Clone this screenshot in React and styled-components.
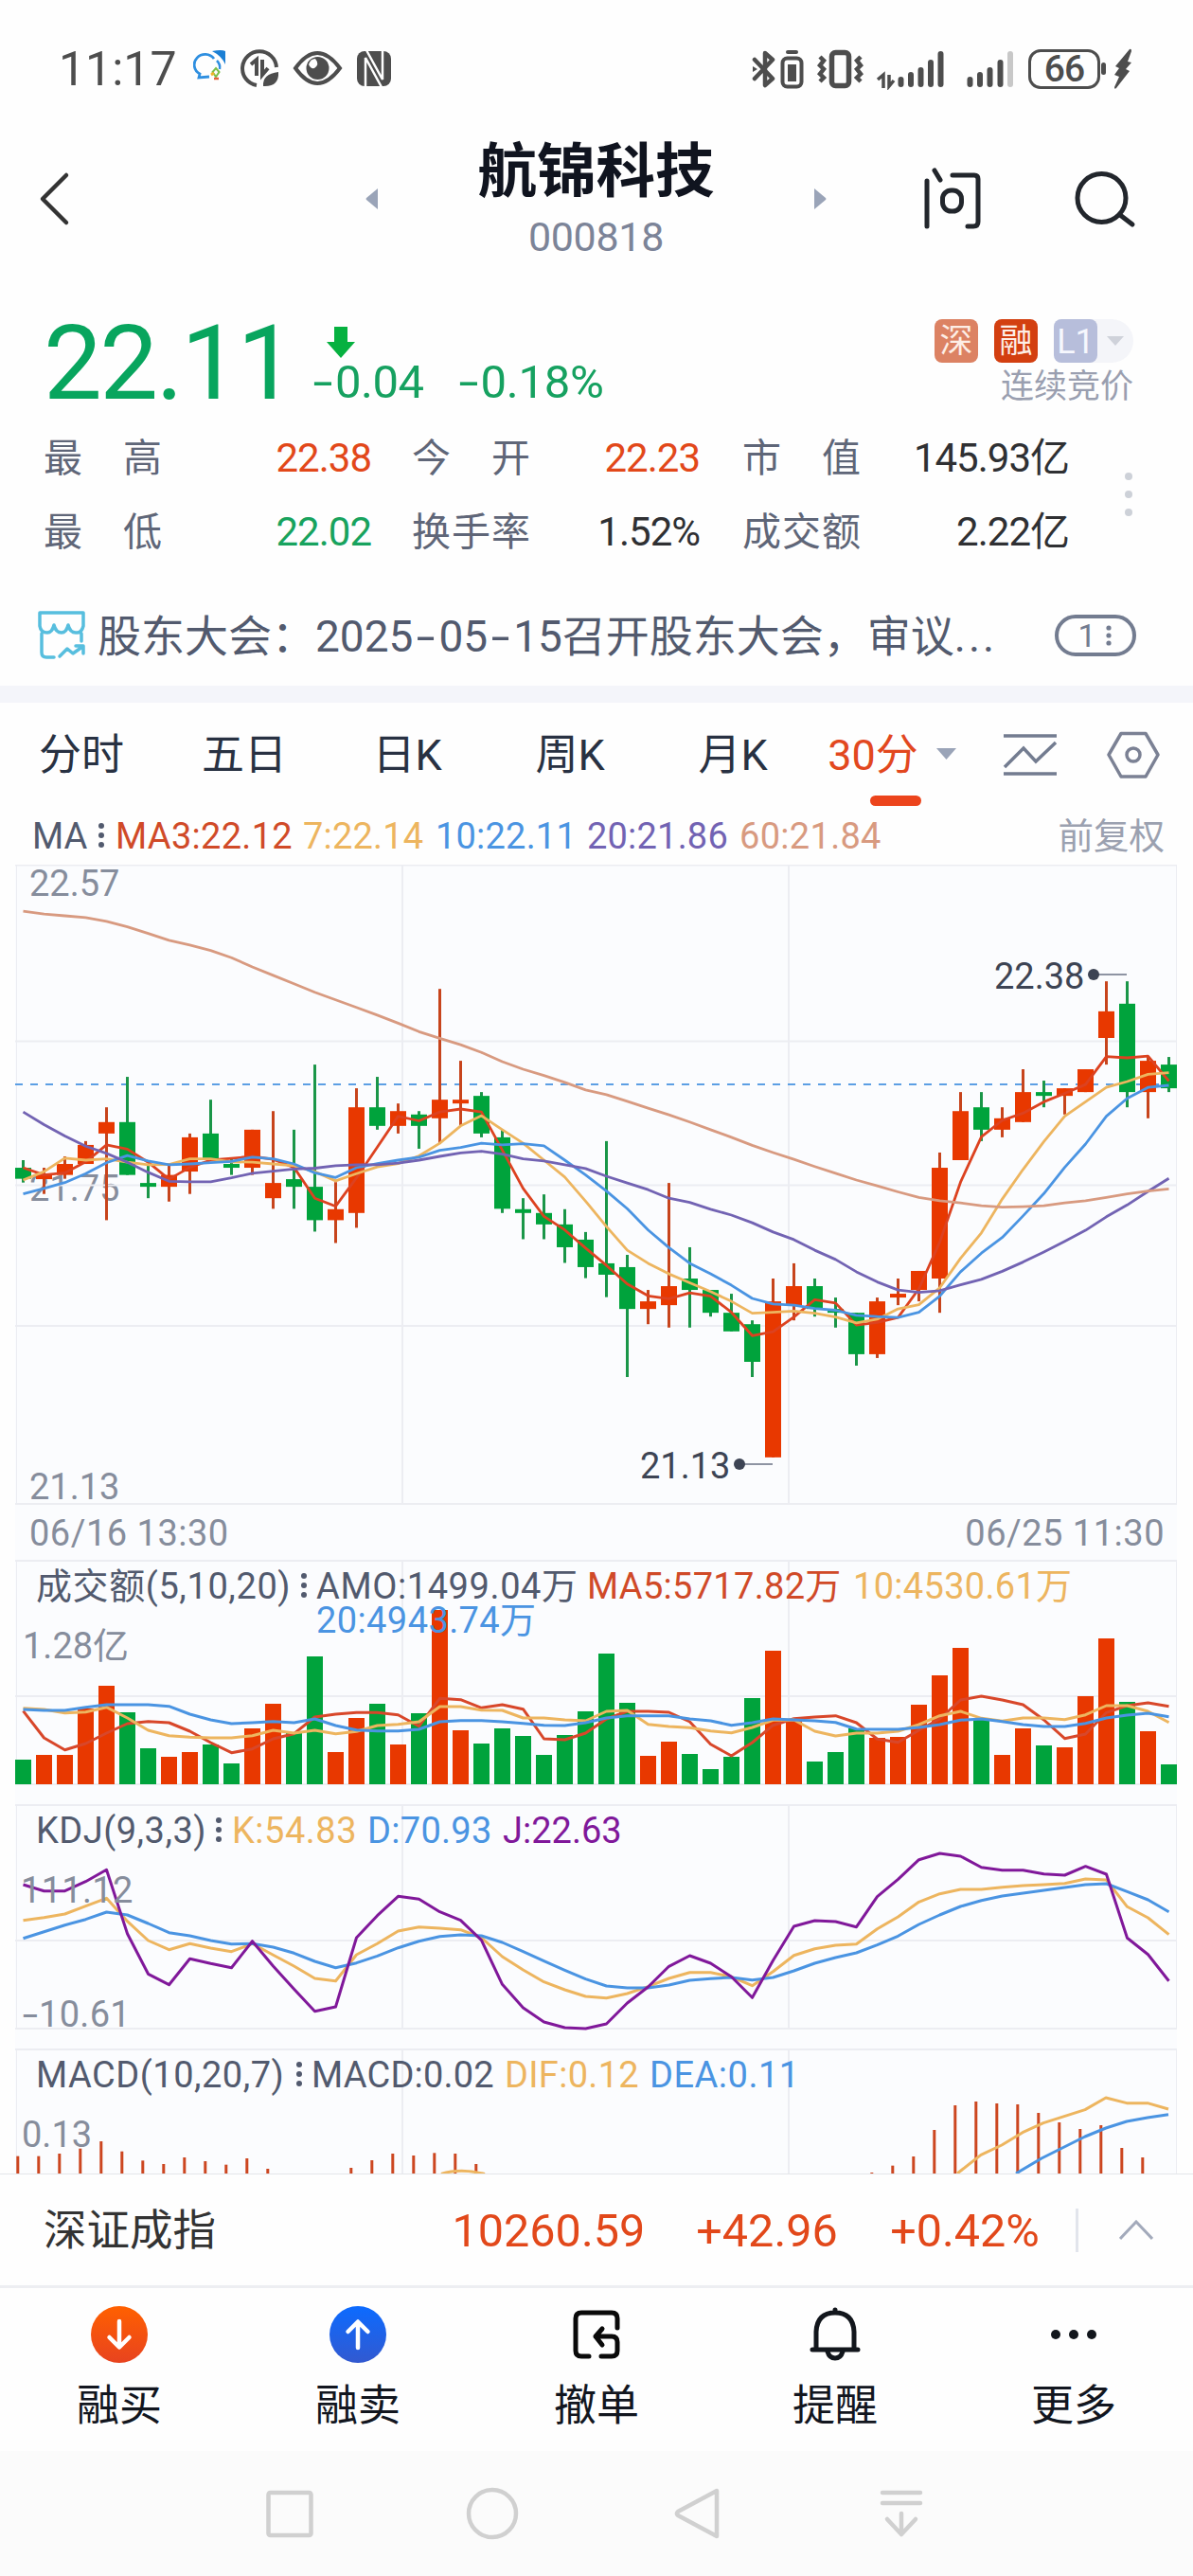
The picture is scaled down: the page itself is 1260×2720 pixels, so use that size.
import React from "react";
import styled, { createGlobalStyle } from "styled-components";

const RED = "#e83800";
const GREEN = "#00a33c";
const LINE = {
  red: "#d04a28",
  yellow: "#edb55f",
  blue: "#4a94e2",
  purple: "#7263b3",
  salmon: "#d89a80",
  violet: "#80189a",
};

const GlobalStyle = createGlobalStyle`
  * { box-sizing: border-box; }
  body {
    margin: 0;
    background: #fefefe;
    font-family: Roboto, "Noto Sans CJK SC", sans-serif;
  }
  svg { display: block; flex: none; }
`;

const Screen = styled.div`
  width: 1260px;
  height: 2720px;
  display: flex;
  flex-direction: column;
  overflow: hidden;
  background: #fefefe;
`;

const Txt = styled.span`
  font-size: ${(p) => p.$size || 38}px;
  color: ${(p) => p.$color || "#525a6e"};
  letter-spacing: ${(p) => p.$ls || 0}px;
  font-weight: ${(p) => p.$weight || 400};
  padding-top: ${(p) => (p.$drop === undefined ? 3 : p.$drop)}px;
  white-space: pre;
  line-height: 1.1;
`;

const Dash = styled.span`
  display: inline-block;
  width: ${(p) => p.$w}px;
  letter-spacing: 0;
  text-align: center;
  transform: scaleX(1.55);
`;

/* ---------- status bar ---------- */
const StatusBar = styled.header`
  height: 146px;
  padding: 0 62px 0 62px;
  display: flex;
  align-items: center;
  justify-content: space-between;
`;
const StatusGroup = styled.div`
  display: flex;
  align-items: center;
`;
const Clock = styled(Txt)`
  width: 142px;
`;
const Battery = styled.div`
  width: 76px;
  height: 42px;
  margin-left: 15px;
  border: 3.5px solid #4d4d4d;
  border-radius: 13px;
  display: flex;
  align-items: center;
  justify-content: center;
`;

/* ---------- title bar ---------- */
const TitleBar = styled.div`
  height: 136px;
  padding: 0 60px 0 40px;
  display: grid;
  grid-template-columns: 340px 500px 1fr;
  align-items: center;
`;
const TitleCenter = styled.div`
  display: flex;
  align-items: center;
  justify-content: space-between;
  padding: 0 7px 0 6px;
  height: 136px;
`;
const Names = styled.div`
  display: flex;
  flex-direction: column;
  align-items: center;
  height: 136px;
`;
const StockName = styled(Txt)`
  line-height: 70px;
`;
const StockCode = styled(Txt)`
  line-height: 66px;
`;
const TitleActions = styled.div`
  display: flex;
  justify-content: flex-end;
  align-items: center;
  gap: 97px;
  padding-bottom: 8px;
`;
const Lift = styled.div`
  padding-bottom: 8px;
`;

/* ---------- quote ---------- */
const Quote = styled.section`
  height: 318px;
  padding: 48px 0 0 46px;
`;
const PriceRow = styled.div`
  height: 114px;
  display: flex;
  align-items: flex-start;
`;
const Price = styled(Txt)`
  line-height: 102px;
  width: 282px;
`;
const ChangeCol = styled.div`
  padding-top: 14px;
  display: flex;
  flex-direction: column;
  flex: 1;
`;
const ChangeLine = styled.div`
  display: flex;
  gap: 34px;
  height: 44px;
  align-items: center;
`;
const ArrowWrap = styled.div`
  padding-left: 16px;
`;
const Tags = styled.div`
  display: flex;
  flex-direction: column;
  align-items: flex-end;
  padding: 7px 63px 0 0;
`;
const TagRow = styled.div`
  display: flex;
  gap: 17px;
`;
const Tag = styled.div`
  width: 46px;
  height: 46px;
  border-radius: 8px;
  background: ${(p) => p.$bg};
  display: flex;
  align-items: center;
  justify-content: center;
`;
const LevelPill = styled.div`
  width: 84px;
  height: 46px;
  display: flex;
  align-items: center;
  gap: 9px;
  background: #f4f5f9;
  border-radius: 8px 23px 23px 8px;
`;
const Phase = styled(Txt)`
  line-height: 46px;
`;
const StatsWrap = styled.div`
  display: flex;
  align-items: center;
`;
const StatsGrid = styled.div`
  width: 1083px;
  display: grid;
  grid-template-columns: 347px 347px 389px;
  grid-auto-rows: 78px;
`;
const STAT_INDENT = [0, 42, 44];
const Stat = styled.div`
  display: flex;
  align-items: center;
  justify-content: space-between;
  padding-right: ${(p) => (p.$col === 2 ? 0 : 1)}px;
  padding-left: ${(p) => STAT_INDENT[p.$col]}px;
`;
const StatLabel = styled.div`
  width: 125px;
  display: flex;
  justify-content: space-between;
`;

/* ---------- notice ---------- */
const Notice = styled.div`
  height: 124px;
  padding: 18px 60px 0 40px;
  display: flex;
  align-items: center;
`;
const NoticeText = styled(Txt)`
  flex: 1;
  padding-left: 13px;
`;
const Ellipsis = styled.span`
  letter-spacing: 3px;
`;
const CountPill = styled.div`
  width: 86px;
  height: 44px;
  border: 4px solid #737c90;
  border-radius: 22px;
  display: flex;
  align-items: center;
  justify-content: center;
  gap: 8px;
`;
const Band = styled.div`
  height: 18px;
  background: #f4f5fa;
`;

/* ---------- tabs ---------- */
const Tabs = styled.nav`
  height: 109px;
  display: flex;
  align-items: stretch;
`;
const Tab = styled.div`
  width: ${(p) => p.$w || 172}px;
  display: flex;
  flex-direction: column;
  align-items: center;
  justify-content: center;
  position: relative;
`;
const Underline = styled.div`
  position: absolute;
  right: 11px;
  bottom: 0;
  width: 54px;
  height: 11px;
  border-radius: 6px;
  background: #ec441c;
`;
const TabIcons = styled.div`
  display: flex;
  align-items: center;
  padding-left: 5px;
`;
const TabIconGap = styled.div`
  width: 52px;
`;

/* ---------- legends ---------- */
const Legend = styled.div`
  display: flex;
  align-items: center;
  height: ${(p) => p.$h || 62}px;
  padding: 0 30px 0 ${(p) => p.$left || 34}px;
`;
const Slot = styled.div`
  width: ${(p) => p.$w}px;
  display: flex;
  align-items: center;
`;
const Spacer = styled.div`
  flex: 1;
`;

/* ---------- charts ---------- */
const Charts = styled.main`
  margin: 0 17px 0 16px;
  height: 1382px;
  background: #fbfcfe;
`;
const Panel = styled.section`
  position: relative;
  height: ${(p) => p.$h}px;
  svg { position: relative; z-index: 1; overflow: hidden; }
`;
const Overlay = styled.div`
  position: absolute;
  left: 0;
  top: 0;
  right: 0;
  z-index: 2;
`;
const AxisLabel = styled(Txt)`
  position: absolute;
  left: ${(p) => p.$x}px;
  top: ${(p) => p.$y}px;
  z-index: ${(p) => (p.$behind ? 0 : 2)};
  padding-top: 0;
  line-height: 40px;
`;
const DateRow = styled.div`
  height: 58px;
  padding: 0 13px 0 15px;
  display: flex;
  align-items: center;
  justify-content: space-between;
`;

/* ---------- bottom ---------- */
const IndexBar = styled.div`
  height: 121px;
  border-top: 1px solid #e4e6ea;
  border-bottom: 3px solid #edeef2;
  padding: 0 42px 0 46px;
  display: flex;
  align-items: center;
`;
const Divider = styled.div`
  width: 3px;
  height: 46px;
  background: #e2e5ec;
  margin: 0 43px 0 36px;
`;
const Toolbar = styled.div`
  height: 172px;
  display: grid;
  grid-template-columns: repeat(5, 252px);
`;
const Tool = styled.div`
  display: flex;
  flex-direction: column;
  align-items: center;
  padding-top: 19px;
  gap: 18px;
`;
const NavBar = styled.footer`
  flex: 1;
  background: #fbfbfb;
  display: flex;
  align-items: center;
  padding-left: 280px;
`;

/* ---------- icons ---------- */
const VDots = ({ color = "#525a6e", r = 3, gap = 10 }) => (
  <svg width="10" height={gap * 2 + 10} viewBox={`0 0 10 ${gap * 2 + 10}`} fill={color}>
    {[0, 1, 2].map((i) => (
      <circle key={i} cx="5" cy={5 + gap * i} r={r} />
    ))}
  </svg>
);

const StatusLeftIcons = () => (
  <svg width="212" height="44" viewBox="204 51 212 44" fill="none">
    <path d="M226 62 A11.5 11 0 1 0 211 78 L210 82 L221 81" stroke="#2f8fe0" strokeWidth="2.800" />
    <path d="M224 54 Q234 52 238 54 L238 68 Q234 59 224 54Z" fill="#1b7fd4" />
    <path d="M229 64 Q233 68 232 73" stroke="#2f8fe0" strokeWidth="2.500" />
    <path d="M228 72 l3.500 4 -3.500 5 -3.500 -5z" stroke="#7bbf4a" strokeWidth="2" />
    <path d="M223 79 l3 -2" stroke="#f0b429" strokeWidth="3" />
    <path d="M226 83 l5 0" stroke="#e2643c" strokeWidth="2.500" />
    <path d="M271 90 A18 18 0 1 1 292 71" stroke="#4d4d4d" strokeWidth="4" />
    <path d="M265 68 l6 -5 V80 M277 63 V79 l6 -7" stroke="#4d4d4d" strokeWidth="4" />
    <path d="M278 91 Q277 78 294 76 Q295 92 278 91Z" fill="#4d4d4d" />
    <path d="M312 72 Q335 40 359 72 Q335 104 312 72Z" stroke="#4d4d4d" strokeWidth="4" />
    <circle cx="335.500" cy="72" r="12" fill="#4d4d4d" />
    <path d="M326 68 Q328 62 333 62 Q338 68 332 72 Q328 73 326 68Z" fill="#fefefe" />
    <rect x="377" y="54" width="36" height="37" rx="8" fill="#4d4d4d" />
    <path d="M386 92 V61 L403 92 M404 53 V84 L387 53" stroke="#fefefe" strokeWidth="2.500" />
  </svg>
);

const StatusRightIcons = () => (
  <svg width="277" height="44" viewBox="793 50 277 44" fill="none" stroke="#4d4d4d">
    <path d="M796 62 L815 82 L807 89 V55 L815 62 L796 82" strokeWidth="4.500" strokeLinejoin="round" strokeLinecap="round" />
    <path d="M794 69 l5 3 -5 3z" fill="#4d4d4d" stroke="none" />
    <rect x="829" y="52" width="13" height="4" rx="2" fill="#4d4d4d" stroke="none" />
    <rect x="825.500" y="60.500" width="20" height="30" rx="5" strokeWidth="4" />
    <rect x="831" y="67" width="9" height="18" fill="#4d4d4d" stroke="none" />
    <rect x="877.500" y="54.500" width="18" height="35" rx="4" strokeWidth="5.500" />
    <path d="M865 59 l4 4 -4 5 4 4 -4 5 4 4 -4 4 M908 59 l-4 4 4 5 -4 4 4 5 -4 4 4 4" strokeWidth="4.500" />
    <path d="M926 83 l6 -5 V92 M938 78 V90 l5 -6" strokeWidth="3.500" />
    <g strokeWidth="6" strokeLinecap="round">
      <path d="M950.500 83 V88 M961 78 V88 M971.500 73 V88 M982 65 V88 M992.500 56 V88" />
      <path d="M1023.500 83 V88 M1034 78 V88 M1044.500 73 V88 M1055.500 65 V88" />
      <path d="M1066 56 V88" stroke="#c8c8c8" />
    </g>
  </svg>
);

const BoltIcon = () => (
  <svg width="36" height="44" viewBox="1162 50 36 44" fill="#4d4d4d">
    <rect x="1163" y="65" width="5" height="13" rx="2.500" />
    <path d="M1193 51 Q1195 50 1195 53 L1191 64 L1195 65 L1189 72 L1193 74 L1179 92 Q1177 94 1177 91 L1182 80 L1177 78 L1182 71 L1178 69 Z" />
  </svg>
);

const AskIcon = () => (
  <svg width="62" height="66" viewBox="975 177 62 66" fill="none" stroke="#22262c" strokeWidth="5" strokeLinecap="round" strokeLinejoin="round">
    <path d="M979 191 V239 M987 180 L993 190" />
    <path d="M1006 185 H1029 Q1033 185 1033 189 V234 Q1033 239 1028 239 H1022" />
    <rect x="995.500" y="201" width="20" height="22" rx="9" />
  </svg>
);

const SearchIcon = () => (
  <svg width="66" height="62" viewBox="1134 179 66 62" fill="none" stroke="#22262c" strokeWidth="5" strokeLinecap="round">
    <circle cx="1163.500" cy="209" r="25.500" />
    <path d="M1183 227 L1196 237" />
  </svg>
);

const ShopIcon = () => (
  <svg width="50" height="52" viewBox="40 646 50 52" fill="none" stroke="#57bede" strokeWidth="3.500" strokeLinejoin="round" strokeLinecap="round">
    <path d="M42 648 H88 V662 Q86 670 80 669 Q74 669 72 661 Q70 669 65 669 Q59 669 57 661 Q55 669 50 669 Q43 669 42 662 Z" />
    <path d="M44 670 V690 Q44 695 49 695 H57 M86 670 V678" />
    <path d="M63 694 L71 686 L77 691 L87 684 M80 683 H88 V691" />
  </svg>
);

const CaretIcon = () => (
  <svg width="70" height="28" viewBox="989 790 70 28" fill="#9aa4b8">
    <path d="M989 797 H1010 L999.500 809 Z" />
  </svg>
);

const TrendIcon = () => (
  <svg width="58" height="46" viewBox="1059 773 58 46" fill="none" stroke="#737c90" strokeWidth="3.500">
    <path d="M1060 776 H1116 M1060 816 H1116 M1061 809 L1081 789 L1094 803 L1115 783" />
  </svg>
);

const HexIcon = () => (
  <svg width="56" height="52" viewBox="1169 770 56 52" fill="none" stroke="#7b8194" strokeWidth="3.500" strokeLinejoin="round">
    <path d="M1184 773.500 H1210 L1223 796 L1210 819 H1184 L1171 796 Z" />
    <circle cx="1197" cy="796" r="7" />
  </svg>
);

const CircleArrow = ({ up }) => (
  <svg width="60" height="60" viewBox="0 0 60 60">
    <defs>
      <linearGradient id={up ? "gUp" : "gDown"} x1="0" y1="0" x2="0" y2="1">
        <stop offset="0" stopColor={up ? "#0c6bff" : "#ff6000"} />
        <stop offset="1" stopColor={up ? "#3259d0" : "#e8431f"} />
      </linearGradient>
    </defs>
    <circle cx="30" cy="30" r="30" fill={`url(#${up ? "gUp" : "gDown"})`} />
    <path
      d={up ? "M30 44 V17 M19.500 27 L30 16.500 L40.500 27" : "M30 16 V43 M19.500 33 L30 43.500 L40.500 33"}
      fill="none"
      stroke="#fff"
      strokeWidth="4.500"
      strokeLinecap="round"
      strokeLinejoin="round"
    />
  </svg>
);

const CancelIcon = () => (
  <svg width="60" height="60" viewBox="600 2435 60 60" fill="none" stroke="#0a0a0a" strokeWidth="5" strokeLinecap="round" strokeLinejoin="round">
    <path d="M652 2458 V2448 Q652 2442 646 2442 H614 Q608 2442 608 2448 V2482 Q608 2488 614 2488 H622" />
    <path d="M636 2459 L629 2467 L636 2476 M629 2467 H646 Q652 2467 652 2473 V2482 Q652 2488 646 2488 H635" />
  </svg>
);

const BellIcon = () => (
  <svg width="60" height="60" viewBox="852 2435 60 60" fill="none" stroke="#12161c" strokeWidth="5" strokeLinecap="round" strokeLinejoin="round">
    <path d="M862 2480 V2462 Q863 2442 882 2442 Q901 2442 902 2462 V2480 M858 2481 H906 M882 2439 V2441" />
    <path d="M874 2483 Q876 2490 882 2490 Q888 2490 890 2483" />
  </svg>
);

const MoreIcon = () => (
  <svg width="60" height="60" viewBox="0 0 60 60" fill="#12161c">
    <circle cx="11" cy="30" r="5" />
    <circle cx="30" cy="30" r="5" />
    <circle cx="49" cy="30" r="5" />
  </svg>
);

const NavIcons = () => (
  <svg width="696" height="56" viewBox="281 2626 696 56" fill="none" stroke="#d0d0d0" strokeWidth="4.500" strokeLinecap="round" strokeLinejoin="round">
    <rect x="284.500" y="2632" width="45" height="45" rx="2" />
    <circle cx="521" cy="2654" r="25" />
    <path d="M758 2630 V2678 L717 2656 Q715 2654 717 2652 Z" />
    <path d="M933 2632 H973 M933 2643 H973 M953 2654 V2676 M938 2660 L953 2676 L968 2660" />
  </svg>
);

/* ---------- chart data ---------- */
/* colour, body top, body bottom, high, low */
const CANDLES = [
  ["g", 746, 772, 728, 781], ["r", 763, 773, 746, 808], ["r", 737, 763, 719, 772], ["r", 692, 737, 683, 737],
  ["r", 638, 665, 603, 870], ["g", 638, 763, 531, 763], ["g", 782, 791, 737, 818], ["r", 763, 791, 740, 826],
  ["r", 674, 755, 665, 808], ["g", 665, 728, 585, 728], ["g", 737, 746, 722, 763], ["r", 656, 746, 656, 763],
  ["r", 782, 818, 612, 843], ["g", 773, 791, 656, 843], ["g", 791, 870, 502, 897], ["r", 844, 870, 780, 924],
  ["r", 603, 853, 558, 888], ["g", 603, 647, 531, 656], ["r", 612, 647, 594, 665], ["g", 620, 647, 612, 701],
  ["r", 585, 629, 323, 690], ["r", 585, 594, 493, 645], ["g", 576, 665, 567, 674], ["g", 674, 843, 656, 853],
  ["g", 844, 853, 818, 915], ["g", 853, 880, 809, 915], ["g", 880, 934, 844, 971], ["g", 916, 981, 898, 1007],
  ["g", 972, 999, 683, 1052], ["g", 981, 1080, 952, 1241], ["r", 1062, 1080, 1035, 1116], ["r", 1026, 1071, 782, 1124],
  ["g", 1008, 1035, 934, 1124], ["g", 1035, 1089, 1035, 1098], ["g", 1089, 1133, 1044, 1133], ["g", 1116, 1205, 1107, 1241],
  ["r", 1062, 1431, 1008, 1431], ["r", 1026, 1071, 972, 1107], ["g", 1026, 1080, 1008, 1098], ["g", 1080, 1089, 1053, 1124],
  ["g", 1089, 1187, 1089, 1214], ["r", 1062, 1187, 1053, 1196], ["r", 1044, 1053, 1008, 1071], ["r", 990, 1035, 990, 1062],
  ["r", 746, 1008, 710, 1089], ["r", 612, 728, 567, 728], ["g", 603, 656, 567, 683], ["r", 629, 656, 603, 674],
  ["r", 567, 638, 513, 638], ["g", 567, 576, 540, 603], ["r", 558, 576, 558, 620], ["r", 513, 567, 513, 567],
  ["r", 376, 439, 305, 502], ["g", 358, 567, 305, 603], ["r", 493, 567, 484, 629], ["g", 502, 558, 484, 567],
];
const MA3 = [
  746, 763, 758, 732, 692, 702, 733, 773, 745, 728, 724, 719, 714, 725, 745, 818, 837,
].slice(0, 12).concat([
  726, 745, 818, 837, 770, 697, 624, 635, 614, 607, 614, 704,
  795, 861, 893, 936, 977, 1021, 1049, 1056, 1042, 1050, 1088, 1143, 1134, 1099, 1058, 1066, 1118, 1112, 1100, 1032,
  922, 780, 673, 634, 617, 590, 570, 549, 483, 486, 482, 541,
]);
const MA7 = [
  775, 755, 723, 728, 725, 733, 739, 738, 725, 725, 732, 733, 737, 741, 755, 777, 760, 744, 736, 718, 688, 647, 623, 656,
  688, 728, 768, 825, 885, 941, 972, 997, 1018, 1039, 1062, 1090, 1088, 1085, 1090, 1099, 1113, 1104, 1080, 1070,
  1030, 960, 900, 820, 750, 684, 624, 590, 556, 542, 525, 521,
];
const MA10 = [
  808, 795, 781, 760, 734, 717, 730, 739, 737, 734, 731, 721, 725, 737, 758, 769, 746, 736, 728, 721, 705, 698, 688, 692,
  689, 694, 728, 763, 801, 843, 893, 935, 972, 997, 1024, 1055, 1068, 1071, 1079, 1083, 1095, 1098, 1100, 1088,
  1050, 992, 948, 911, 860, 807, 745, 690, 624, 582, 556, 551,
];
const MA20 = [
  614, 644, 671, 695, 712, 733, 757, 778, 779, 779, 770, 759, 754, 749, 747, 741, 739, 739, 735, 728, 719, 711, 707, 714,
  725, 730, 739, 748, 766, 782, 798, 818, 828, 844, 858, 876, 898, 916, 941, 963, 992, 1016, 1035, 1041,
  1037, 1023, 1010, 991, 969, 945, 920, 894, 862, 834, 802, 771,
];
const MA60 = [
  139, 146, 150, 154, 163, 176, 192, 208, 219, 232, 249, 271, 291, 311, 331, 349, 367, 385, 404, 424, 440, 455, 473, 495,
  513, 528, 544, 562, 573, 589, 605, 621, 638, 656, 674, 693, 710, 726, 743, 759, 775, 789, 803, 816,
  824, 829, 836, 839, 838, 836, 829, 824, 816, 808, 801, 796,
];
const VOLUMES = [
  834, 819, 819, 672, 600, 684, 798, 825, 810, 786, 846, 735, 657, 750, 507, 810, 702, 657, 786, 687, 360, 741, 783, 735,
  759, 819, 756, 681, 498, 654, 822, 777, 816, 864, 825, 639, 489, 705, 840, 810, 735, 765, 762, 660,
  567, 480, 705, 819, 735, 789, 795, 633, 450, 651, 744, 849,
];
const V5 = [
  680, 765, 803, 783, 750, 720, 713, 717, 744, 780, 812, 800, 768, 752, 699, 690, 685, 685, 692, 728, 640, 644, 670, 660,
  674, 768, 771, 750, 705, 681, 681, 684, 714, 785, 822, 780, 725, 704, 699, 695, 717, 769, 779, 741,
  705, 645, 633, 645, 660, 708, 767, 753, 685, 663, 654, 665,
];
const V10 = [
  671, 675, 686, 683, 668, 702, 741, 758, 763, 765, 765, 758, 741, 750, 741, 752, 745, 726, 722, 714, 666, 666, 677, 678,
  702, 702, 708, 711, 681, 678, 722, 729, 733, 743, 749, 732, 709, 708, 744, 759, 750, 750, 744, 723,
  695, 681, 703, 712, 702, 702, 707, 692, 663, 663, 681, 716,
];
const V20 = [
  675, 678, 678, 668, 660, 660, 660, 665, 690, 708, 720, 717, 713, 717, 705, 726, 740, 743, 743, 738, 714, 710, 710, 714,
  719, 725, 726, 717, 702, 695, 695, 695, 705, 711, 725, 717, 705, 708, 711, 716, 737, 738, 738, 732,
  723, 709, 705, 713, 723, 729, 729, 719, 702, 693, 687, 698,
];
const K_LINE = [
  413, 404, 393, 368, 343, 416, 477, 506, 487, 501, 512, 487, 523, 558, 597, 605, 522, 487, 447, 434, 438, 443, 468, 528,
  570, 608, 633, 654, 659, 645, 623, 597, 578, 578, 592, 620, 575, 524, 503, 492, 488, 440, 402, 355,
  329, 315, 315, 308, 303, 300, 296, 282, 285, 370, 405, 458,
];
const D_LINE = [
  470, 449, 428, 410, 387, 396, 423, 452, 462, 477, 488, 487, 498, 517, 543, 563, 548, 526, 500, 479, 464, 459, 462, 483,
  512, 542, 571, 599, 621, 627, 627, 618, 603, 598, 594, 602, 594, 573, 549, 531, 516, 491, 463, 426,
  396, 369, 350, 336, 327, 318, 309, 300, 297, 322, 348, 386,
];
const J_LINE = [
  300, 320, 320, 290, 253, 455, 583, 617, 535, 550, 563, 479, 558, 631, 701, 687, 468, 398, 337, 346, 386, 413, 476, 616,
  690, 735, 753, 756, 741, 675, 624, 559, 525, 549, 592, 658, 540, 432, 414, 417, 434, 338, 283, 221,
  201, 210, 245, 254, 254, 266, 270, 242, 267, 469, 521, 605,
];
const MACD_BARS = {
  0: 1160, 1: 1160, 2: 1152, 3: 1136, 4: 1113, 5: 1145, 6: 1174, 7: 1185, 8: 1164, 9: 1176, 10: 1187, 11: 1167, 12: 1200,
  16: 1197, 17: 1173, 18: 1152, 19: 1158, 20: 1150, 21: 1152, 22: 1185,
  41: 1212, 42: 1190, 43: 1161, 44: 1077, 45: 999, 46: 987, 47: 993, 48: 996, 49: 1023, 50: 1053, 51: 1074, 52: 1062, 53: 1134, 54: 1164,
};
const DIF = [
  [995, 1215], [1020, 1156], [1042, 1125], [1064, 1085], [1086, 1055], [1108, 1034], [1130, 1013], [1152, 975],
  [1174, 992], [1196, 992], [1218, 1011],
];
const DEA = [
  [1057, 1215], [1084, 1167], [1106, 1134], [1130, 1098], [1152, 1071], [1174, 1050], [1196, 1038], [1218, 1028],
];

const cx = (i) => 8.5 + 22 * i;
const yMain = (v) => v / 2.24 - 13;
const yVol = (v) => v / 3 - 67;
const yKdj = (v) => v / 3 - 15;
const yMacd = (v) => v / 3 - 273;

const Series = ({ data, y, color, w = 2.8 }) => (
  <polyline
    points={data.map((v, i) => `${cx(i)},${y(v).toFixed(1)}`).join(" ")}
    fill="none"
    stroke={color}
    strokeWidth={w}
    strokeLinejoin="round"
  />
);

const Grid = ({ rows, bottom }) => (
  <g stroke="#ecedf2" strokeWidth="2">
    {rows.map((r) => (
      <line key={r} x1="0" x2="1227" y1={r} y2={r} />
    ))}
    <path d={`M409 ${rows[0]} V${bottom} M817 ${rows[0]} V${bottom}`} />
    <path d={`M1.500 ${rows[0]} V${bottom} M1226.500 ${rows[0]} V${bottom}`} strokeWidth="1" />
  </g>
);

const MainChart = () => (
  <Panel $h={676}>
    <AxisLabel $x={15} $y={0} $color="#868d9c" $behind>22.57</AxisLabel>
    <AxisLabel $x={15} $y={322} $color="#868d9c" $behind>21.75</AxisLabel>
    <AxisLabel $x={15} $y={637} $color="#868d9c" $behind>21.13</AxisLabel>
    <svg width="1227" height="676" viewBox="0 0 1227 676">
      <Grid rows={[0.5, 186.5, 338.5, 487, 675]} bottom={675} />
      <line x1="0" x2="1227" y1="232" y2="232" stroke="#5c9fe4" strokeWidth="2" strokeDasharray="8 8" />
      {CANDLES.map(([c, t, b, h, l], i) => (
        <g key={i} fill={c === "r" ? RED : GREEN}>
          <rect x={cx(i) - 1.5} y={yMain(h)} width="3" height={(l - h) / 2.24} fill={c === "r" ? "#c7441c" : "#1a9648"} />
          <rect x={cx(i) - 8.5} y={yMain(t)} width="17" height={(b - t) / 2.24} />
        </g>
      ))}
      <Series data={MA3} y={yMain} color="#dc4220" />
      <Series data={MA7} y={yMain} color={LINE.yellow} />
      <Series data={MA10} y={yMain} color={LINE.blue} />
      <Series data={MA20} y={yMain} color={LINE.purple} />
      <Series data={MA60} y={yMain} color={LINE.salmon} />
      <g stroke="#8e94a3" strokeWidth="2" fill="#3d4454">
        <line x1="1144" x2="1174" y1="116" y2="116" />
        <circle cx="1139" cy="116" r="6" stroke="none" />
        <line x1="770" x2="800" y1="633" y2="633" />
        <circle cx="765" cy="633" r="6" stroke="none" />
      </g>
    </svg>
    <AxisLabel $x={1034} $y={98} $color="#3d4454">22.38</AxisLabel>
    <AxisLabel $x={660} $y={615} $color="#3d4454">21.13</AxisLabel>
  </Panel>
);

const VolumeChart = () => (
  <Panel $h={258}>
    <svg width="1227" height="258" viewBox="0 0 1227 258">
      <Grid rows={[1, 144, 237]} bottom={237} />
      {VOLUMES.map((v, i) => (
        <rect key={i} x={cx(i) - 8.5} y={yVol(v)} width="17" height={(912 - v) / 3} fill={CANDLES[i][0] === "r" ? RED : GREEN} />
      ))}
      <Series data={V5} y={yVol} color="#d8472a" w={3} />
      <Series data={V10} y={yVol} color={LINE.yellow} w={3} />
      <Series data={V20} y={yVol} color={LINE.blue} w={3} />
    </svg>
    <Overlay>
      <Legend $h={54} $left={22}>
        <Slot $w={278}><Txt $ls={0.6}>成交额(5,10,20)</Txt></Slot>
        <Slot $w={18}><VDots /></Slot>
        <Slot $w={286}><Txt $ls={0.6}>AMO:1499.04万</Txt></Slot>
        <Slot $w={281}><Txt $color={LINE.red} $ls={0.3}>MA5:5717.82万</Txt></Slot>
        <Txt $color={LINE.yellow} $ls={0.3}>10:4530.61万</Txt>
      </Legend>
    </Overlay>
    <AxisLabel $x={318} $y={44} $color={LINE.blue} $ls={0.4}>20:4943.74万</AxisLabel>
    <AxisLabel $x={8} $y={71} $color="#868d9c">1.28亿</AxisLabel>
  </Panel>
);

const KdjChart = () => (
  <Panel $h={258}>
    <svg width="1227" height="258" viewBox="0 0 1227 258">
      <Grid rows={[1, 144, 237]} bottom={237} />
      <Series data={K_LINE} y={yKdj} color={LINE.yellow} w={3} />
      <Series data={D_LINE} y={yKdj} color={LINE.blue} w={3} />
      <Series data={J_LINE} y={yKdj} color={LINE.violet} w={3} />
    </svg>
    <Overlay>
      <Legend $h={54} $left={22}>
        <Slot $w={188}><Txt $ls={0.5}>KDJ(9,3,3)</Txt></Slot>
        <Slot $w={19}><VDots /></Slot>
        <Slot $w={143}><Txt $color={LINE.yellow} $ls={0.5}>K:54.83</Txt></Slot>
        <Slot $w={143}><Txt $color={LINE.blue} $ls={0.3}>D:70.93</Txt></Slot>
        <Txt $color={LINE.violet}>J:22.63</Txt>
      </Legend>
    </Overlay>
    <AxisLabel $x={6} $y={71} $color="#868d9c" $ls={0.3}>111.12</AxisLabel>
    <AxisLabel $x={7} $y={202} $color="#868d9c" $ls={0.3}><Dash $w={18}>-</Dash>10.61</AxisLabel>
  </Panel>
);

const MacdChart = () => (
  <Panel $h={132}>
    <svg width="1227" height="132" viewBox="0 0 1227 132">
      <Grid rows={[1]} bottom={132} />
      {Object.entries(MACD_BARS).map(([i, v]) => (
        <rect key={i} x={1.3 + 22 * i} y={yMacd(v)} width="3" height={(1215 - v) / 3} fill="#cc4620" />
      ))}
      <g fill="none" strokeWidth="3" strokeLinejoin="round">
        <path d="M450 132.500 Q470 126 496 132.500" stroke={LINE.yellow} />
        <polyline points={DIF.map(([x, v]) => `${x},${yMacd(v)}`).join(" ")} stroke={LINE.yellow} />
        <polyline points={DEA.map(([x, v]) => `${x},${yMacd(v)}`).join(" ")} stroke={LINE.blue} />
      </g>
    </svg>
    <Overlay>
      <Legend $h={54} $left={22}>
        <Slot $w={273}><Txt $ls={0.5}>MACD(10,20,7)</Txt></Slot>
        <Slot $w={18}><VDots /></Slot>
        <Slot $w={204}><Txt $ls={0.2}>MACD:0.02</Txt></Slot>
        <Slot $w={153}><Txt $color={LINE.yellow} $ls={0.3}>DIF:0.12</Txt></Slot>
        <Txt $color={LINE.blue} $ls={0.5}>DEA:0.11</Txt>
      </Legend>
    </Overlay>
    <AxisLabel $x={7} $y={71} $color="#868d9c">0.13</AxisLabel>
  </Panel>
);

const STATS = [
  ["最高", "22.38", "#e2481a"],
  ["今开", "22.23", "#e2481a"],
  ["市值", "145.93亿", "#2f3033"],
  ["最低", "22.02", "#18a35e"],
  ["换手率", "1.52%", "#2f3033"],
  ["成交额", "2.22亿", "#2f3033"],
];

const TOOLS = [
  ["融买", <CircleArrow key="i" />],
  ["融卖", <CircleArrow key="i" up />],
  ["撤单", <CancelIcon key="i" />],
  ["提醒", <BellIcon key="i" />],
  ["更多", <MoreIcon key="i" />],
];

export default function App() {
  return (
    <>
      <GlobalStyle />
      <Screen>
        <StatusBar>
          <StatusGroup>
            <Clock $size={50} $color="#4d4d4d" $drop={0}>11:17</Clock>
            <StatusLeftIcons />
          </StatusGroup>
          <StatusGroup>
            <StatusRightIcons />
            <Battery><Txt $size={39} $color="#4d4d4d" $weight={500} $ls={-1} $drop={1}>66</Txt></Battery>
            <BoltIcon />
          </StatusGroup>
        </StatusBar>

        <TitleBar>
          <Lift>
            <svg width="36" height="60" viewBox="40 180 36 60" fill="none" stroke="#333" strokeWidth="4.500" strokeLinecap="round" strokeLinejoin="round">
              <path d="M70 185 L45 210 L70 235" />
            </svg>
          </Lift>
          <TitleCenter>
            <Lift>
              <svg width="14" height="24" viewBox="0 0 14 24" fill="#9aa4b8"><path d="M13 1 V23 L1 13 Q0 12 1 11 Z" /></svg>
            </Lift>
            <Names>
              <StockName $size={62.5} $weight={700} $color="#10141f" $drop={1}>航锦科技</StockName>
              <StockCode $size={43} $color="#7c8498" $ls={-0.3} $drop={0}>000818</StockCode>
            </Names>
            <Lift>
              <svg width="14" height="24" viewBox="0 0 14 24" fill="#9aa4b8"><path d="M1 1 V23 L13 13 Q14 12 13 11 Z" /></svg>
            </Lift>
          </TitleCenter>
          <TitleActions>
            <AskIcon />
            <SearchIcon />
          </TitleActions>
        </TitleBar>

        <Quote>
          <PriceRow>
            <Price $size={110} $color="#08a55e" $ls={-2.5}>22.11</Price>
            <ChangeCol>
              <ArrowWrap>
                <svg width="32" height="36" viewBox="0 0 32 36" fill="#06b140"><path d="M9 1 H23 V17 H31 L16 34 L1 17 H9 Z" /></svg>
              </ArrowWrap>
              <ChangeLine>
                <Txt $size={49} $color="#16a160" $ls={-0.5}><Dash $w={26}>-</Dash>0.04</Txt>
                <Txt $size={49} $color="#16a160" $ls={-0.3}><Dash $w={26}>-</Dash>0.18%</Txt>
              </ChangeLine>
            </ChangeCol>
            <Tags>
              <TagRow>
                <Tag $bg="#dc8263"><Txt $size={35} $color="#fdeee6">深</Txt></Tag>
                <Tag $bg="#d33f10"><Txt $size={35} $color="#fdeee6">融</Txt></Tag>
                <LevelPill>
                  <Tag $bg="#b7bedb"><Txt $size={36} $color="#f6f7fd">L1</Txt></Tag>
                  <svg width="20" height="12" viewBox="0 0 20 12" fill="#cfd2da"><path d="M1 1 H19 L10 11 Z" /></svg>
                </LevelPill>
              </TagRow>
              <Phase $size={35} $color="#9a9fb0">连续竞价</Phase>
            </Tags>
          </PriceRow>
          <StatsWrap>
            <StatsGrid>
              {STATS.map(([label, value, color], i) => (
                <Stat key={label} $col={i % 3}>
                  <StatLabel>
                    {label.split("").map((ch) => (
                      <Txt key={ch} $size={41} $color="#5f6678">{ch}</Txt>
                    ))}
                  </StatLabel>
                  <Txt $size={42} $color={color} $ls={-1}>{value}</Txt>
                </Stat>
              ))}
            </StatsGrid>
            <Spacer />
            <svg width="131" height="50" viewBox="0 0 131 50" fill="#cdd1d8">
              <circle cx="63" cy="6" r="4" /><circle cx="63" cy="25" r="4" /><circle cx="63" cy="44" r="4" />
            </svg>
          </StatsWrap>
        </Quote>

        <Notice>
          <ShopIcon />
          <NoticeText $size={46} $ls={0}>
            股东大会：2025<Dash $w={27}>-</Dash>05<Dash $w={27}>-</Dash>15召开股东大会，审议<Ellipsis>...</Ellipsis>
          </NoticeText>
          <CountPill>
            <Txt $size={34} $color="#737c90" $drop={1}>1</Txt>
            <VDots color="#737c90" r={2.6} gap={8} />
          </CountPill>
        </Notice>
        <Band />

        <Tabs>
          {["分时", "五日", "日K", "周K", "月K"].map((t) => (
            <Tab key={t}><Txt $size={45} $color="#283142">{t}</Txt></Tab>
          ))}
          <Tab $w={124}>
            <Txt $size={45} $color="#e2481f">30分</Txt>
            <Underline />
          </Tab>
          <TabIcons>
            <CaretIcon />
            <TrendIcon />
            <TabIconGap />
            <HexIcon />
          </TabIcons>
        </Tabs>

        <Legend>
          <Slot $w={68}><Txt>MA</Txt></Slot>
          <Slot $w={20}><VDots /></Slot>
          <Slot $w={198}><Txt $color={LINE.red} $ls={0.3}>MA3:22.12</Txt></Slot>
          <Slot $w={140}><Txt $color={LINE.yellow} $ls={0.2}>7:22.14</Txt></Slot>
          <Slot $w={160}><Txt $color={LINE.blue} $ls={0.2}>10:22.11</Txt></Slot>
          <Slot $w={161}><Txt $color={LINE.purple} $ls={0.2}>20:21.86</Txt></Slot>
          <Txt $color={LINE.salmon} $ls={0.3}>60:21.84</Txt>
          <Spacer />
          <Txt $size={37.5} $color="#9ba1b0">前复权</Txt>
        </Legend>

        <Charts>
          <MainChart />
          <DateRow>
            <Txt $color="#868d9c" $ls={0.5}>06/16 13:30</Txt>
            <Txt $color="#868d9c" $ls={0.5}>06/25 11:30</Txt>
          </DateRow>
          <VolumeChart />
          <KdjChart />
          <MacdChart />
        </Charts>

        <IndexBar>
          <Slot $w={432}><Txt $size={45.5} $color="#333">深证成指</Txt></Slot>
          <Slot $w={258}><Txt $size={48.5} $color="#e2481a">10260.59</Txt></Slot>
          <Slot $w={205}><Txt $size={48.5} $color="#e2481a">+42.96</Txt></Slot>
          <Slot $w={160}><Txt $size={48.5} $color="#e2481a">+0.42%</Txt></Slot>
          <Divider />
          <svg width="36" height="22" viewBox="1181 2343 36 22" fill="none" stroke="#a3aabb" strokeWidth="3">
            <path d="M1182 2363 L1199 2345 L1216 2363" />
          </svg>
        </IndexBar>

        <Toolbar>
          {TOOLS.map(([label, icon]) => (
            <Tool key={label}>
              {icon}
              <Txt $size={45} $color="#12161f">{label}</Txt>
            </Tool>
          ))}
        </Toolbar>

        <NavBar>
          <NavIcons />
        </NavBar>
      </Screen>
    </>
  );
}
